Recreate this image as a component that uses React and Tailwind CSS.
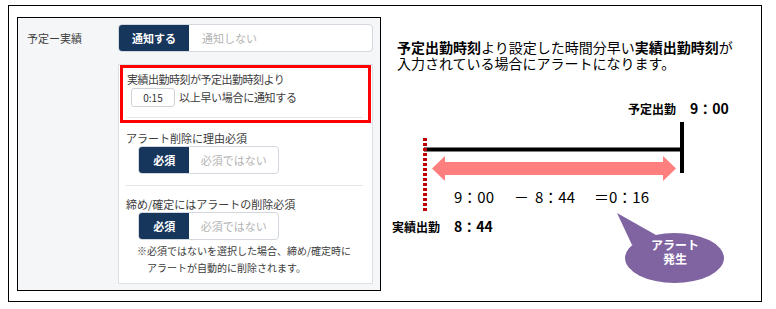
import React from 'react';

const jp = "font-['Noto_Sans_CJK_JP',sans-serif]";

const Toggle = ({ on, off, onWidth, offWidth }) => (
  <div className="flex h-[28px] rounded-[4px] border border-[#d3d8de] overflow-hidden bg-white">
    <div className={`${onWidth} flex items-center justify-center bg-[#17365c] text-white text-[11px] font-bold`}>
      {on}
    </div>
    <div className={`${offWidth} flex items-center justify-center text-[#b4b4b4] text-[11px]`}>
      {off}
    </div>
  </div>
);

const SettingsPanel = () => (
  <div className="w-[364px] h-[274px] border border-black bg-[#f5f6f8] flex pl-[9px] pt-[6px] text-[#3c3c3c]">
    <div className="w-[91px] text-[11px] leading-[28px]">予定ー実績</div>
    <div className="w-[255px]">
      <Toggle on="通知する" off="通知しない" onWidth="w-[70px]" offWidth="w-[81px]" />

      <div className="mt-[12px] w-[255px] h-[220px] border border-[#dde1e6] bg-white">
        {/* red highlight box */}
        <div className="ml-[1px] w-[251px] h-[58px] border-[3px] border-[#ff0000]">
          <div className="pl-[4px] pt-[3px] text-[11px] leading-[16px] tracking-[-0.5px]">実績出勤時刻が予定出勤時刻より</div>
          <div className="flex items-center mt-[1px] pl-[8px]">
            <div className="w-[44px] h-[19px] border border-[#cfd3d8] rounded-[3px] flex items-center justify-center text-[10px] text-[#333]">
              0:15
            </div>
            <span className="ml-[4px] text-[11px] tracking-[-0.3px]">以上早い場合に通知する</span>
          </div>
          <div className="ml-[4px] mt-[10px] w-[236px] h-px bg-[#e3e5e8]" />
        </div>

        <div className="pl-[7px]">
          <div className="pt-[7px] text-[11px] leading-[16px]">アラート削除に理由必須</div>
          <div className="ml-[12px] w-[141px]">
            <Toggle on="必須" off="必須ではない" onWidth="w-[51px]" offWidth="w-[90px]" />
          </div>
          <div className="mt-[11px] w-[237px] h-px bg-[#e3e5e8]" />

          <div className="mt-[10px] text-[11px] leading-[16px]">締め/確定にはアラートの削除必須</div>
          <div className="ml-[12px] w-[141px]">
            <Toggle on="必須" off="必須ではない" onWidth="w-[51px]" offWidth="w-[90px]" />
          </div>
          <div className="mt-[2px] ml-[11px] text-[10px] leading-[17px]">
            <div>※必須ではないを選択した場合、締め/確定時に</div>
            <div className="pl-[10px]">アラートが自動的に削除されます。</div>
          </div>
        </div>
      </div>
    </div>
  </div>
);

const Diagram = () => (
  <div className="relative w-[380px] h-[295px] text-black">
    <svg className="absolute left-0 top-0" width="380" height="295" viewBox="0 0 380 295">
      <line x1="301" y1="116" x2="301" y2="167" stroke="#000" strokeWidth="4" />
      <line x1="43" y1="143.5" x2="303" y2="143.5" stroke="#000" strokeWidth="4" />
      <line x1="44" y1="132" x2="44" y2="205" stroke="#c00000" strokeWidth="4" strokeDasharray="3 2" />
      <polygon
        points="51,162.5 64,150 64,156 282,156 282,150 295,162.5 282,175 282,169 64,169 64,175"
        fill="#ff7f7f"
      />
      <ellipse cx="293.5" cy="252" rx="49.5" ry="25" fill="#8064a2" />
      <polygon points="236,207 251,239 275,229" fill="#8064a2" />
    </svg>

    <div className="absolute left-[16px] top-[33px] text-[14px] leading-[16px] whitespace-nowrap">
      <div>
        <b>予定出勤時刻</b>より設定した時間分早い<b>実績出勤時刻</b>が
      </div>
      <div>入力されている場合にアラートになります。</div>
    </div>

    <div className="absolute left-[247px] top-[94px] leading-[16px] font-bold whitespace-nowrap flex items-baseline">
      <span className="text-[12px]">予定出勤</span>
      <span className="ml-[14px] text-[14px]">9：00</span>
    </div>

    <div className="absolute left-[73px] top-[181px] leading-[20px] text-[15px] whitespace-nowrap flex">
      <span>9：00</span>
      <span className="ml-[20px]">－</span>
      <span className="ml-[6px]">8：44</span>
      <span className="ml-[19px]">＝0：16</span>
    </div>

    <div className="absolute left-[11px] top-[212px] leading-[16px] font-bold whitespace-nowrap flex items-baseline">
      <span className="text-[12px]">実績出勤</span>
      <span className="ml-[14px] text-[14px]">8：44</span>
    </div>

    <div className="absolute left-[254px] top-[232px] w-[80px] text-center text-white font-bold text-[12px] leading-[14px]">
      <div>アラート</div>
      <div>発生</div>
    </div>
  </div>
);

const App = () => {
  return (
    <div className={`w-[776px] h-[309px] bg-white pt-[5px] pl-[8px] ${jp}`}>
      <div className="w-[754px] h-[297px] border border-black flex">
        <div className="ml-[8px] mt-[11px]">
          <SettingsPanel />
        </div>
        <Diagram />
      </div>
    </div>
  );
};

export default App;
